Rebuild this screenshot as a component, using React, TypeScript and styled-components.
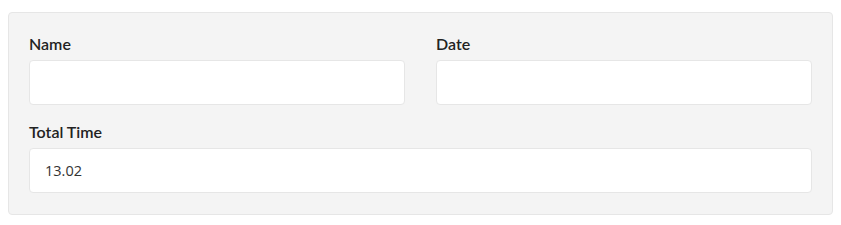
import styled, { createGlobalStyle } from "styled-components"

const GlobalStyle = createGlobalStyle`
  body {
    margin: 8px;
    background: #ffffff;
    font-family: Lato, "Open Sans", sans-serif;
  }
`

const Panel = styled.div`
  margin-top: 4px;
  background-color: #f4f4f4;
  border: 1px solid #e6e6e6;
  border-radius: 4px;
  padding: 20px 20px 21px;
  display: grid;
  grid-template-columns: 1fr 1fr;
  column-gap: 31px;
  row-gap: 16px;
`

const Field = styled.div<{ wide?: boolean }>`
  display: flex;
  flex-direction: column;
  grid-column: ${({ wide }) => (wide ? "1 / -1" : "auto")};
`

const Label = styled.label`
  font-size: 16px;
  font-weight: 600;
  color: #222;
  line-height: 21px;
  margin-bottom: 6px;
`

const Input = styled.input`
  box-sizing: border-box;
  height: 45px;
  width: 100%;
  background: #fff;
  border: 1px solid #e6e6e6;
  border-radius: 4px;
  padding: 0 15px;
  font-family: "Open Sans", Lato, sans-serif;
  font-size: 14.5px;
  color: #333;
  outline: none;
`

const App = () => {
  return (
    <>
      <GlobalStyle />
      <Panel>
        <Field>
          <Label>Name</Label>
          <Input type="text" />
        </Field>
        <Field>
          <Label>Date</Label>
          <Input type="text" />
        </Field>
        <Field wide>
          <Label>Total Time</Label>
          <Input type="text" defaultValue="13.02" />
        </Field>
      </Panel>
    </>
  )
}

export default App
